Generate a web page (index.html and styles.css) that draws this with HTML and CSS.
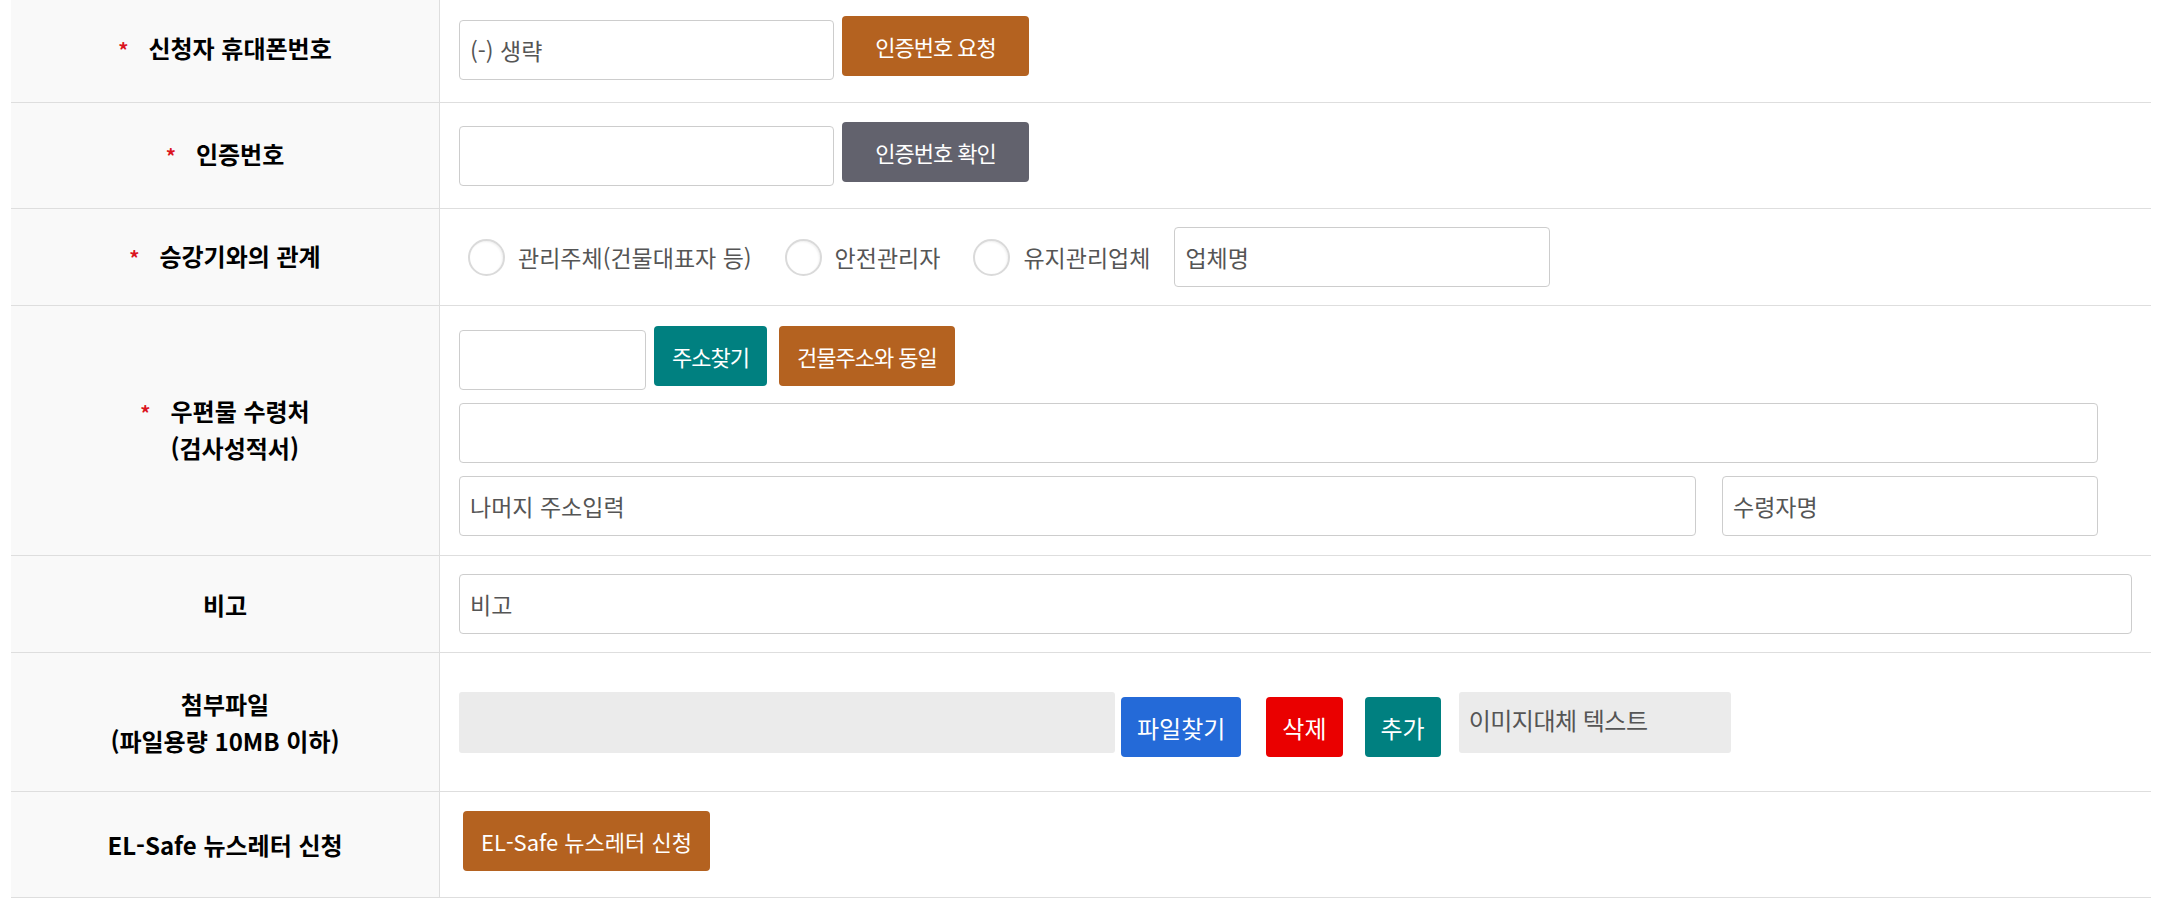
FILE: index.html
```html
<!DOCTYPE html>
<html lang="ko">
<head>
  <meta charset="UTF-8">
  <meta name="viewport" content="width=device-width, initial-scale=1">
  <title>신청서</title>
  <link rel="stylesheet" href="styles.css">
</head>
<body>

  <div class="form-table">

    <!-- 휴대폰번호 -->
    <div class="form-row">
      <div class="form-label">
        <div class="label-group"><span class="req">*</span><span>신청자 휴대폰번호</span></div>
      </div>
      <div class="form-field">
        <input type="text" class="input w-phone" placeholder="(-) 생략">
        <button class="btn btn-brown btn-auth btn-lift">인증번호 요청</button>
      </div>
    </div>

    <!-- 인증번호 -->
    <div class="form-row">
      <div class="form-label">
        <div class="label-group"><span class="req">*</span><span>인증번호</span></div>
      </div>
      <div class="form-field">
        <input type="text" class="input w-phone">
        <button class="btn btn-gray btn-auth btn-lift">인증번호 확인</button>
      </div>
    </div>

    <!-- 관계 -->
    <div class="form-row row-sm">
      <div class="form-label">
        <div class="label-group"><span class="req">*</span><span>승강기와의 관계</span></div>
      </div>
      <div class="form-field">
        <label class="radio first"><span class="radio-mark"></span>관리주체(건물대표자 등)</label>
        <label class="radio"><span class="radio-mark"></span>안전관리자</label>
        <label class="radio"><span class="radio-mark"></span>유지관리업체</label>
        <input type="text" class="input w-company" placeholder="업체명">
      </div>
    </div>

    <!-- 우편물 수령처 -->
    <div class="form-row row-address">
      <div class="form-label">
        <div class="label-group"><span class="req">*</span><span class="label-left">우편물 수령처<br>(검사성적서)</span></div>
      </div>
      <div class="form-field">
        <div class="address">
          <div class="address-line">
            <input type="text" class="input w-zip">
            <button class="btn btn-teal btn-up">주소찾기</button>
            <button class="btn btn-brown btn-up btn-same">건물주소와 동일</button>
          </div>
          <div class="address-line">
            <input type="text" class="input grow">
          </div>
          <div class="address-line split">
            <input type="text" class="input grow" placeholder="나머지 주소입력">
            <input type="text" class="input w-receiver" placeholder="수령자명">
          </div>
        </div>
      </div>
    </div>

    <!-- 비고 -->
    <div class="form-row row-sm">
      <div class="form-label"><span>비고</span></div>
      <div class="form-field">
        <input type="text" class="input grow" placeholder="비고">
      </div>
    </div>

    <!-- 첨부파일 -->
    <div class="form-row row-file">
      <div class="form-label"><span>첨부파일<br>(파일용량 10MB 이하)</span></div>
      <div class="form-field">
        <div class="file-name"></div>
        <button class="btn btn-blue btn-file btn-drop">파일찾기</button>
        <button class="btn btn-red btn-file btn-drop gap-l">삭제</button>
        <button class="btn btn-teal btn-file btn-drop gap-m">추가</button>
        <div class="file-alt">이미지대체 텍스트</div>
      </div>
    </div>

    <!-- 뉴스레터 -->
    <div class="form-row">
      <div class="form-label"><span>EL-Safe 뉴스레터 신청</span></div>
      <div class="form-field">
        <button class="btn btn-brown btn-news btn-lift">EL-Safe 뉴스레터 신청</button>
      </div>
    </div>

  </div>

</body>
</html>
```

FILE: styles.css
```css
body {
  margin: 0;
  font-family: "Noto Sans CJK KR", "Noto Sans", sans-serif;
  color: #000;
  background: #fff;
}

.form-table {
  margin: -3px 13px 0 11px;
}

.form-row {
  display: flex;
  min-height: 106px;
  box-sizing: border-box;
  border-bottom: 1px solid #dedede;
}
.form-row.row-sm { min-height: 97px; }
.form-row.row-file { min-height: 139px; }
.form-row.row-address { min-height: 250px; }

.form-label {
  flex: none;
  width: 429px;
  box-sizing: border-box;
  background: #f9f9f9;
  border-right: 1px solid #dedede;
  display: flex;
  align-items: center;
  justify-content: center;
  text-align: center;
  font-size: 24px;
  font-weight: 700;
  line-height: 37px;
}

.label-group {
  display: flex;
  align-items: flex-start;
  padding-bottom: 4px;
}
.label-left { text-align: left; }

/* required mark */
.req {
  color: #db1420;
  font-size: 20px;
  line-height: 20px;
  margin-top: 11px;
  margin-right: 20px;
}

.form-field {
  flex: 1;
  display: flex;
  align-items: center;
  padding: 0 19px;
}

.input {
  height: 60px;
  box-sizing: border-box;
  border: 1px solid #cdcdcd;
  border-radius: 4px;
  padding: 0 10px;
  font-family: inherit;
  font-size: 23px;
  color: #555;
  background: #fff;
}
.input::placeholder { color: #555; }

.w-phone { width: 375px; }
.w-company { width: 376px; margin-left: 24px; }
.w-zip { width: 187px; }
.w-receiver { width: 376px; }
.grow { flex: 1; min-width: 0; }

.btn {
  height: 60px;
  border: 0;
  border-radius: 4px;
  padding: 0 18px;
  color: #fff;
  font-family: inherit;
  font-size: 22px;
  letter-spacing: -1px;
  cursor: pointer;
}
.btn-brown { background: #b46220; }
.btn-gray { background: #62626d; }
.btn-teal { background: #008080; }
.btn-blue { background: #246ad8; }
.btn-red { background: #ea0000; }

.btn-auth { width: 187px; margin-left: 8px; }
.btn-lift { margin-bottom: 8px; }
.btn-news { margin-left: 4px; padding: 0 18px; letter-spacing: 0; }

/* radio group */
.radio {
  display: flex;
  align-items: center;
  gap: 13px;
  margin-left: 33px;
  font-size: 23px;
  color: #555;
}
.radio.first { margin-left: 9px; }
.radio-mark {
  width: 37px;
  height: 37px;
  box-sizing: border-box;
  border: 2px solid #dadada;
  border-radius: 50%;
  box-shadow: inset -1px 1px 2px rgba(0, 0, 0, 0.06);
  background: #fff;
}

/* address block */
.address {
  flex: 1;
  display: flex;
  flex-direction: column;
  gap: 13px;
  margin-right: 34px;
  padding-top: 5px;
}
.address-line {
  display: flex;
  align-items: flex-start;
}
.btn-up { margin-top: -4px; }
.address-line .btn-teal { margin-left: 8px; }
.btn-same { margin-left: 12px; }
.address-line.split { gap: 26px; }

/* file row */
.file-name {
  width: 656px;
  height: 61px;
  background: #ebebeb;
  border-radius: 3px;
}
.btn-file {
  font-size: 24px;
  padding: 0 16px;
  margin-left: 6px;
  letter-spacing: 0;
}
.btn-drop { margin-top: 10px; }
.btn-file.gap-l { margin-left: 25px; }
.btn-file.gap-m { margin-left: 22px; }
.file-alt {
  width: 272px;
  height: 61px;
  box-sizing: border-box;
  margin-left: 18px;
  padding: 13px 10px 0;
  background: #ebebeb;
  border-radius: 3px;
  font-size: 24px;
  line-height: 30px;
  color: #555;
  letter-spacing: -0.5px;
}
```
